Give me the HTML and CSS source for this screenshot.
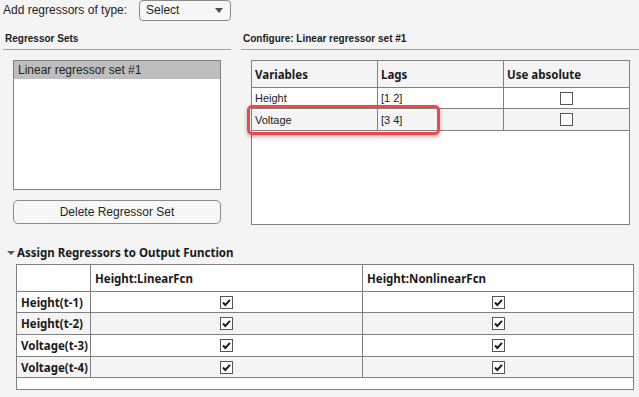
FILE: index.html
```html
<!DOCTYPE html>
<html>
<head>
<meta charset="utf-8">
<link rel="stylesheet" href="styles.css">
</head>
<body>
<div class="page">
  <div class="top">
    <span class="top-label">Add regressors of type:</span>
    <div class="select"><span>Select</span><span class="caret"></span></div>
  </div>

  <div class="panels">
    <div class="panel panel-left">
      <div class="panel-title">Regressor Sets</div>
      <div class="list">
        <div class="list-item selected">Linear regressor set #1</div>
      </div>
      <div class="button">Delete Regressor Set</div>
    </div>
    <div class="panel panel-right">
      <div class="panel-title">Configure: Linear regressor set #1</div>
      <div class="vtable">
        <div class="vrow vhead">
          <div class="vcell">Variables</div>
          <div class="vcell">Lags</div>
          <div class="vcell">Use absolute</div>
        </div>
        <div class="vrow">
          <div class="vcell">Height</div>
          <div class="vcell">[1 2]</div>
          <div class="vcell center"><span class="cb"></span></div>
        </div>
        <div class="vrow alt">
          <div class="vcell">Voltage</div>
          <div class="vcell">[3 4]</div>
          <div class="vcell center"><span class="cb"></span></div>
        </div>
      </div>
      <div class="highlight"></div>
    </div>
  </div>

  <div class="section-title"><span class="tri"></span>Assign Regressors to Output Function</div>
  <div class="atable">
    <div class="arow ahead">
      <div class="acell"></div>
      <div class="acell">Height:LinearFcn</div>
      <div class="acell">Height:NonlinearFcn</div>
    </div>
    <div class="arow">
      <div class="acell lbl">Height(t-1)</div>
      <div class="acell center"><span class="cb checked"><svg viewBox="0 0 13 13" width="13" height="13"><path d="M3 6.5 L5.3 9 L10 3.8" fill="none" stroke="#1e1e1e" stroke-width="2"/></svg></span></div>
      <div class="acell center"><span class="cb checked"><svg viewBox="0 0 13 13" width="13" height="13"><path d="M3 6.5 L5.3 9 L10 3.8" fill="none" stroke="#1e1e1e" stroke-width="2"/></svg></span></div>
    </div>
    <div class="arow alt">
      <div class="acell lbl">Height(t-2)</div>
      <div class="acell center"><span class="cb checked"><svg viewBox="0 0 13 13" width="13" height="13"><path d="M3 6.5 L5.3 9 L10 3.8" fill="none" stroke="#1e1e1e" stroke-width="2"/></svg></span></div>
      <div class="acell center"><span class="cb checked"><svg viewBox="0 0 13 13" width="13" height="13"><path d="M3 6.5 L5.3 9 L10 3.8" fill="none" stroke="#1e1e1e" stroke-width="2"/></svg></span></div>
    </div>
    <div class="arow r3">
      <div class="acell lbl">Voltage(t-3)</div>
      <div class="acell center"><span class="cb checked"><svg viewBox="0 0 13 13" width="13" height="13"><path d="M3 6.5 L5.3 9 L10 3.8" fill="none" stroke="#1e1e1e" stroke-width="2"/></svg></span></div>
      <div class="acell center"><span class="cb checked"><svg viewBox="0 0 13 13" width="13" height="13"><path d="M3 6.5 L5.3 9 L10 3.8" fill="none" stroke="#1e1e1e" stroke-width="2"/></svg></span></div>
    </div>
    <div class="arow alt r4">
      <div class="acell lbl">Voltage(t-4)</div>
      <div class="acell center"><span class="cb checked"><svg viewBox="0 0 13 13" width="13" height="13"><path d="M3 6.5 L5.3 9 L10 3.8" fill="none" stroke="#1e1e1e" stroke-width="2"/></svg></span></div>
      <div class="acell center"><span class="cb checked"><svg viewBox="0 0 13 13" width="13" height="13"><path d="M3 6.5 L5.3 9 L10 3.8" fill="none" stroke="#1e1e1e" stroke-width="2"/></svg></span></div>
    </div>
    <div class="aempty"></div>
  </div>
</div>
</body>
</html>
```

FILE: styles.css
```css
* { box-sizing: border-box; }
html, body { margin: 0; padding: 0; }
body {
  background: #f4f4f4;
  font-family: "Liberation Sans", Arial, sans-serif;
  font-size: 12px;
  color: #1f1f1f;
  width: 639px;
  height: 397px;
  overflow: hidden;
}
.page { width: 639px; height: 397px; }

.top {
  display: flex;
  align-items: center;
  height: 21px;
  padding-left: 3px;
  gap: 12px;
}
.top-label { line-height: 14px; margin-top: -2px; }
.select {
  width: 92px;
  height: 21px;
  border: 1px solid #8a8a8a;
  border-radius: 4px;
  background: #f7f7f7;
  display: flex;
  align-items: center;
  justify-content: space-between;
  padding: 0 7px 0 6px;
  margin-top: -1px;
}
.caret {
  width: 0; height: 0;
  border-left: 4px solid transparent;
  border-right: 4px solid transparent;
  border-top: 5px solid #4d4d4d;
}

.panels { display: flex; gap: 10px; padding-left: 3px; }
.panel { position: relative; }
.panel-left { width: 228px; }
.panel-right { flex: 1; }
.panel-title {
  font-size: 10px;
  font-weight: bold;
  line-height: 12px;
  padding: 12px 0 4px 2px;
  border-bottom: 1px solid #a0a0a0;
  color: #1a1a1a;
}

.list {
  margin: 10px 0 0 10px;
  width: 208px;
  height: 130px;
  background: #fff;
  border: 1px solid #808080;
}
.list-item {
  height: 18px;
  line-height: 18px;
  padding-left: 4px;
  font-size: 12px;
}
.list-item.selected { background: #bebebe; }

.button {
  margin: 10px 0 0 10px;
  width: 208px;
  height: 24px;
  border: 1px solid #8c8c8c;
  border-radius: 5px;
  background: #f7f7f7;
  display: flex;
  align-items: center;
  justify-content: center;
  font-size: 12px;
}

.vtable {
  margin: 10px 0 0 10px;
  width: 379px;
  height: 165px;
  background: #fff;
  border: 1px solid #808080;
}
.vrow {
  display: grid;
  grid-template-columns: 126px 126px 125px;
  border-bottom: 1px solid #808080;
  height: 21px;
}
.vrow.vhead { height: 27px; background: #f4f4f4; }
.vrow.alt { height: 22px; background: #f4f4f4; }
.vcell {
  border-right: 1px solid #808080;
  display: flex;
  align-items: center;
  padding-left: 3px;
  font-size: 11px;
  color: #1a1a1a;
}
.vcell:last-child { border-right: none; }
.vhead .vcell {
  font-family: "Noto Sans", "Open Sans", sans-serif;
  font-weight: 700;
  font-size: 11.5px;
  color: #1a1a1a;
  padding-left: 3px;
}
.center { justify-content: center; padding-left: 0 !important; }
.cb {
  display: inline-block;
  width: 13px;
  height: 13px;
  border: 1px solid #555;
  background: #fff;
  position: relative;
}
.cb svg { position: absolute; left: -1px; top: -1px; }

.highlight {
  position: absolute;
  left: 6px;
  top: 84px;
  width: 193px;
  height: 30px;
  border: 3px solid #f2454b;
  border-radius: 5px;
  box-shadow: 0 2px 4px rgba(0,0,0,0.28);
}

.section-title {
  margin-top: 18px;
  padding-left: 7px;
  height: 18px;
  display: flex;
  align-items: center;
  font-family: "Noto Sans", "Open Sans", sans-serif;
  font-weight: 700;
  font-size: 11.5px;
  color: #1a1a1a;
}
.tri {
  width: 0; height: 0;
  border-left: 4px solid transparent;
  border-right: 4px solid transparent;
  border-top: 4px solid #555;
  margin-right: 2px;
  margin-top: 1px;
}

.atable {
  margin: 3px 0 0 16px;
  width: 618px;
  background: #fff;
  border: 1px solid #808080;
}
.arow {
  display: grid;
  grid-template-columns: 74px 272px 270px;
  border-bottom: 1px solid #808080;
  height: 21px;
}
.arow.ahead { height: 27px; }
.arow.alt { background: #f4f4f4; height: 22px; }
.arow.r3 { height: 22px; }
.arow.r4 { height: 21px; }
.acell {
  border-right: 1px solid #808080;
  display: flex;
  align-items: center;
  padding-left: 4px;
  font-family: "Noto Sans", "Open Sans", sans-serif;
  font-weight: 700;
  font-size: 11.5px;
  color: #1a1a1a;
}
.acell:last-child { border-right: none; }
.aempty { height: 11px; }
```
